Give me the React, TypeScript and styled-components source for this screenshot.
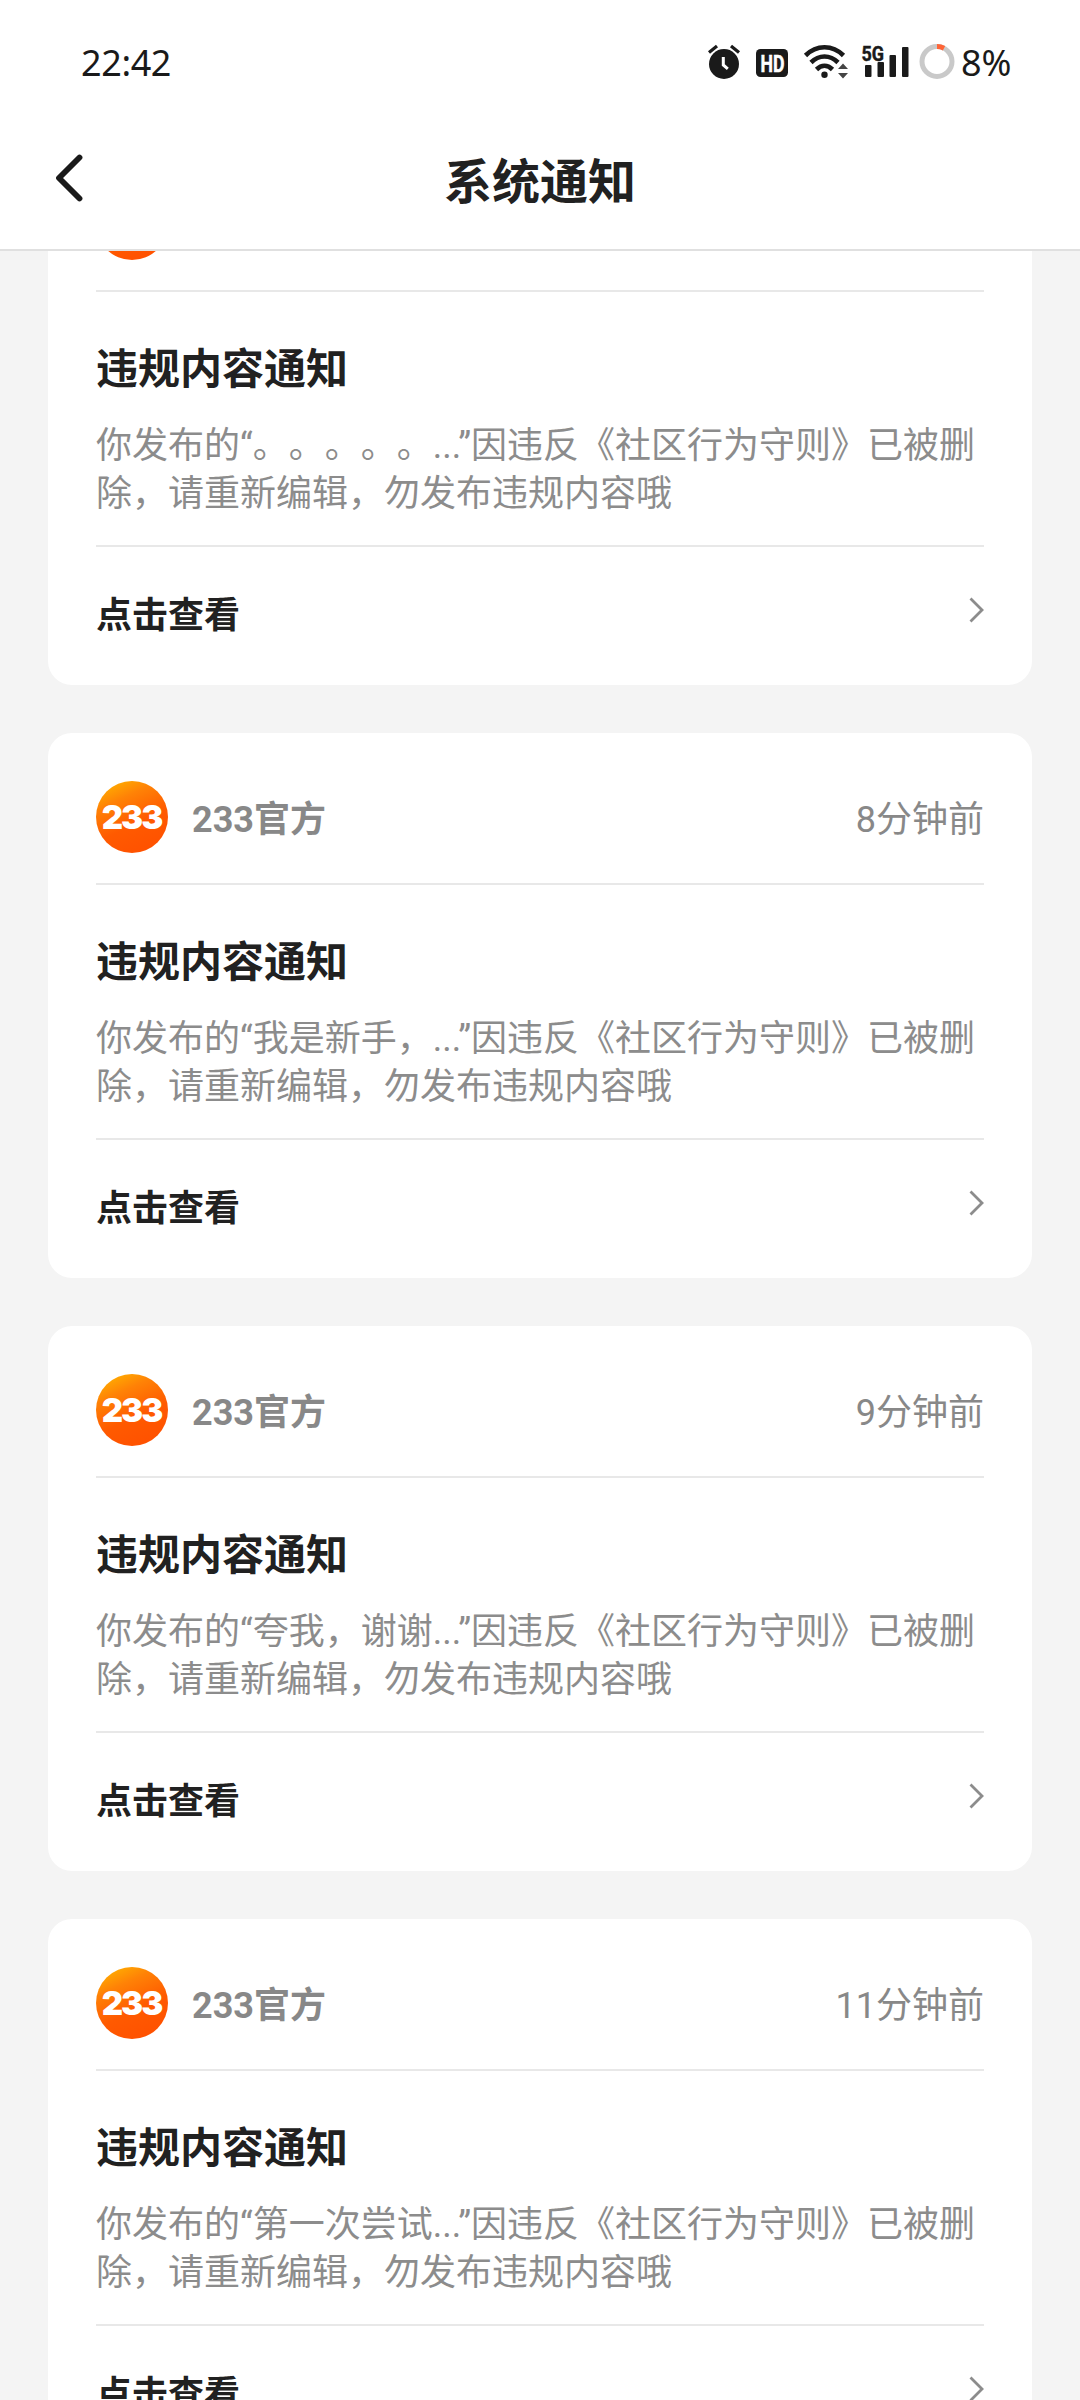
import React from 'react';
import styled, { createGlobalStyle } from 'styled-components';

const GlobalStyle = createGlobalStyle`
  html, body { margin: 0; padding: 0; background: #f4f4f4; }
  * { box-sizing: border-box; }
`;

const Screen = styled.div`
  width: 1080px;
  height: 2400px;
  display: flex;
  flex-direction: column;
  overflow: hidden;
  background: #f4f4f4;
  color: #212121;
  font-family: Roboto, 'Noto Sans CJK SC', sans-serif;
  text-spacing-trim: space-all;
`;

const StatusBar = styled.header`
  flex: none;
  height: 124px;
  padding: 0 69px 0 81px;
  display: flex;
  justify-content: space-between;
  background: #fff;
  color: #1a1a1a;
  font-family: 'Noto Sans', sans-serif;
  font-size: 36px;
  line-height: 125px;
`;

const Clock = styled.time`
  letter-spacing: -0.4px;
`;

const StatusIcons = styled.div`
  display: flex;
  align-items: flex-start;

  svg { display: block; flex: none; }
`;

const Battery = styled.span`
  width: 50px;
`;

const TitleBar = styled.div`
  flex: none;
  height: 127px;
  padding: 0 48px;
  display: grid;
  grid-template-columns: 48px 1fr 48px;
  background: #fff;
  border-bottom: 2px solid #e0e0e0;
`;

const BackButton = styled.button`
  padding: 27px 0 0;
  border: 0;
  background: none;
  display: flex;
  align-items: flex-start;
`;

const PageTitle = styled.h1`
  margin: 0;
  text-align: center;
  font-size: 48px;
  line-height: 118px;
  font-weight: 700;
`;

const Viewport = styled.main`
  flex: 1;
  min-height: 0;
  padding: 0 48px;
  overflow: hidden;
`;

const Feed = styled.div`
  margin-top: -111px;
  display: flex;
  flex-direction: column;
  gap: 48px;
`;

const Card = styled.article`
  flex: none;
  height: 545px;
  padding: 0 48px;
  background: #fff;
  border-radius: 24px;
`;

const Sender = styled.div`
  height: 152px;
  padding-top: 48px;
  display: flex;
  align-items: flex-start;
  border-bottom: 2px solid #e8e8e8;
  color: #888;
  font-size: 36px;
  line-height: 79px;
`;

const Avatar = styled.span`
  width: 72px;
  height: 72px;
  margin-right: 24px;
  padding-right: 1px;
  border-radius: 50%;
  display: flex;
  align-items: center;
  justify-content: center;
  background: linear-gradient(155deg, #ffb400 5%, #ff8206 28%, #ff5a00 58%, #ff4e00 100%);
  color: #fff;
  font-family: Inter, sans-serif;
  font-size: 33px;
  font-weight: 900;
  line-height: 72px;
  letter-spacing: -2px;
`;

const SenderName = styled.strong`
  flex: 1;
  font-weight: 700;
`;

const Body = styled.section`
  height: 255px;
  padding-top: 48px;
  border-bottom: 2px solid #e8e8e8;
`;

const Heading = styled.h2`
  margin: 0;
  font-size: 42px;
  line-height: 60px;
  font-weight: 700;
`;

const Message = styled.p`
  margin: 22px 0 0;
  color: #8c8c8c;
  font-size: 36px;
  line-height: 48px;
`;

const Action = styled.a`
  display: flex;
  justify-content: space-between;
  height: 138px;
  font-size: 36px;
  font-weight: 700;
  line-height: 139px;

  svg { display: block; margin-top: 49px; }
`;

const notices = [
  { age: '7分钟前', quote: '。。。。。' },
  { age: '8分钟前', quote: '我是新手，' },
  { age: '9分钟前', quote: '夸我，谢谢' },
  { age: '11分钟前', quote: '第一次尝试' },
];

const describe = (quote: string) =>
  `你发布的“${quote}...”因违反《社区行为守则》已被删除，请重新编辑，勿发布违规内容哦`;

function SystemIcons() {
  return (
    <svg width="261" height="100" viewBox="700 0 261 100" fill="none">
      <g stroke="#1a1a1a">
        <path d="M709 52.5l8-6.5M731 46l8 6.5" strokeWidth="3.2" />
        <circle cx="724" cy="64" r="15" fill="#1a1a1a" stroke="none" />
        <path d="M723.3 57v8l4.5 3.8" stroke="#fff" strokeWidth="3" />
      </g>
      <rect x="756" y="49" width="32" height="28" rx="4.5" fill="#1a1a1a" />
      <text x="760.5" y="71.5" fill="#fff" stroke="#fff" strokeWidth="0.5" fontFamily="Roboto" fontWeight="700" fontSize="23" textLength="24" lengthAdjust="spacingAndGlyphs">HD</text>
      <g stroke="#1a1a1a" strokeWidth="4.6">
        <path d="M805.5 55.5c11-11 27-11 38 0" />
        <path d="M811 62.5c8-8 19-8 27 0" />
        <path d="M816.5 69.5c5-5 11-5 16 0" />
      </g>
      <circle cx="824.5" cy="74.8" r="3.2" fill="#1a1a1a" />
      <path d="M838 69l5-5.5 5 5.5zM838 73h10l-5 5.5z" fill="#444" />
      <g fill="#1a1a1a">
        <rect x="865" y="65" width="6.5" height="12" rx="1" />
        <rect x="877.5" y="62" width="6.5" height="15" rx="1" />
        <rect x="889.5" y="55" width="6.5" height="22" rx="1" />
        <rect x="902" y="47" width="6.5" height="30" rx="1" />
        <text x="861.5" y="60.5" stroke="#1a1a1a" strokeWidth="0.5" fontFamily="Roboto" fontWeight="700" fontSize="21" textLength="22.5" lengthAdjust="spacingAndGlyphs">5G</text>
      </g>
      <circle cx="937" cy="61.5" r="15" stroke="#c9c9c9" strokeWidth="5" />
      <path d="M937 46.5a15 15 0 0 1 7 1.7" stroke="#ff6436" strokeWidth="5" />
    </svg>
  );
}

export default function App() {
  return (
    <Screen>
      <GlobalStyle />
      <StatusBar>
        <Clock>22:42</Clock>
        <StatusIcons>
          <SystemIcons />
          <Battery>8%</Battery>
        </StatusIcons>
      </StatusBar>
      <TitleBar>
        <BackButton aria-label="返回">
          <svg width="40" height="54" viewBox="0 0 40 54" fill="none">
            <path d="M31.5 6.5L11 27l20.500 20.500" stroke="#1a1a1a" strokeWidth="5.800" strokeLinecap="round" strokeLinejoin="round" />
          </svg>
        </BackButton>
        <PageTitle>系统通知</PageTitle>
      </TitleBar>
      <Viewport>
        <Feed>
          {notices.map((notice) => (
            <Card key={notice.age}>
              <Sender>
                <Avatar>233</Avatar>
                <SenderName>233官方</SenderName>
                <time>{notice.age}</time>
              </Sender>
              <Body>
                <Heading>违规内容通知</Heading>
                <Message>{describe(notice.quote)}</Message>
              </Body>
              <Action>
                点击查看
                <svg width="16" height="28" viewBox="0 0 16 28" fill="none">
                  <path d="M2.500 2.500L14 14 2.500 25.500" stroke="#8c8c8c" strokeWidth="2.800" />
                </svg>
              </Action>
            </Card>
          ))}
        </Feed>
      </Viewport>
    </Screen>
  );
}
